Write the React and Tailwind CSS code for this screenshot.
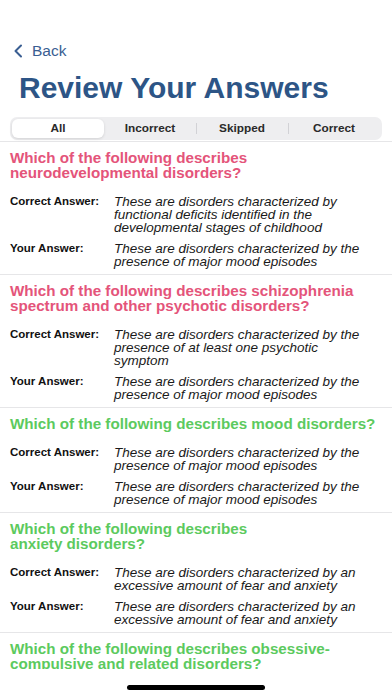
import { useState } from 'react';

const questions = [
  {
    q: 'Which of the following describes neurodevelopmental disorders?',
    status: 'wrong',
    correct: 'These are disorders characterized by functional deficits identified in the developmental stages of childhood',
    yours: 'These are disorders characterized by the presence of major mood episodes',
  },
  {
    q: 'Which of the following describes schizophrenia spectrum and other psychotic disorders?',
    status: 'wrong',
    correct: 'These are disorders characterized by the presence of at least one psychotic symptom',
    yours: 'These are disorders characterized by the presence of major mood episodes',
  },
  {
    q: 'Which of the following describes mood disorders?',
    status: 'right',
    correct: 'These are disorders characterized by the presence of major mood episodes',
    yours: 'These are disorders characterized by the presence of major mood episodes',
  },
  {
    q: ['Which of the following describes', 'anxiety disorders?'],
    status: 'right',
    correct: 'These are disorders characterized by an excessive amount of fear and anxiety',
    yours: 'These are disorders characterized by an excessive amount of fear and anxiety',
  },
  {
    q: 'Which of the following describes obsessive-compulsive and related disorders?',
    status: 'right',
    correct: 'These are disorders characterized by obsessions and compulsions',
    yours: 'These are disorders characterized by obsessions and compulsions',
  },
];

const tabs = ['All', 'Incorrect', 'Skipped', 'Correct'];

function AnswerRow({ label, text }) {
  return (
    <div className="flex pr-3">
      <div className="w-[104px] shrink-0 text-[11.5px] font-bold leading-[13px] text-[#111]">{label}</div>
      <div className="flex-1 text-[13.5px] italic leading-[13px] text-[#1a1a1a]">{text}</div>
    </div>
  );
}

function QuestionCard({ item }) {
  const color = item.status === 'right' ? 'text-[#5cca5e]' : 'text-[#e4547a]';
  return (
    <div className="border-t border-[#e6e6e8] pl-[10px] pr-[8px] pt-2 pb-[6px]">
      <h2 className={`text-[15.2px] font-bold leading-[15px] ${color}`}>
        {Array.isArray(item.q) ? (
          <>
            {item.q[0]}
            <br />
            {item.q[1]}
          </>
        ) : (
          item.q
        )}
      </h2>
      <div className="mt-[15px] flex flex-col gap-2">
        <AnswerRow label="Correct Answer:" text={item.correct} />
        <AnswerRow label="Your Answer:" text={item.yours} />
      </div>
    </div>
  );
}

export default function App() {
  const [tab, setTab] = useState('All');

  return (
    <div
      className="flex h-[696px] w-[392px] flex-col overflow-hidden bg-white"
      style={{ fontFamily: '"Liberation Sans", Arial, sans-serif' }}
    >
      <div className="pt-[41px]">
        <button className="flex h-5 items-center pl-[13px] text-[#3a5e92]">
          <svg width="10" height="14" viewBox="0 0 10 14" fill="none">
            <path d="M8 1.5L2.5 7L8 12.5" stroke="currentColor" strokeWidth="2" strokeLinecap="round" strokeLinejoin="round" />
          </svg>
          <span className="ml-[9px] text-[15.5px] leading-5">Back</span>
        </button>
        <h1 className="mt-[9px] pl-[19px] text-[30px] font-bold leading-9 text-[#2d5586]">Review Your Answers</h1>
        <div className="mx-[10px] mt-[11px] grid h-[23px] grid-cols-4 rounded-[7px] bg-[#eeeef0] p-[2px]">
          {tabs.map((t, i) => {
            const active = t === tab;
            const showSep = i > 1 && tabs[i - 1] !== tab;
            return (
              <button
                key={t}
                onClick={() => setTab(t)}
                className={`relative flex items-center justify-center rounded-[6px] text-[11.8px] font-bold text-[#2a2a2a] ${
                  active ? 'bg-white shadow-[0_1px_3px_rgba(0,0,0,0.12)]' : ''
                }`}
              >
                {showSep && <span className="absolute left-0 top-[4px] h-[11px] w-px bg-[#d2d2d6]" />}
                {t}
              </button>
            );
          })}
        </div>
        <div className="h-px" />
      </div>

      <div className="min-h-0 flex-1 overflow-hidden">
        {questions.map((item, i) => (
          <QuestionCard key={i} item={item} />
        ))}
      </div>

      <div className="flex h-[27px] shrink-0 items-start justify-center pt-[16px]">
        <div className="h-[5px] w-[138px] rounded-full bg-black" />
      </div>
    </div>
  );
}
